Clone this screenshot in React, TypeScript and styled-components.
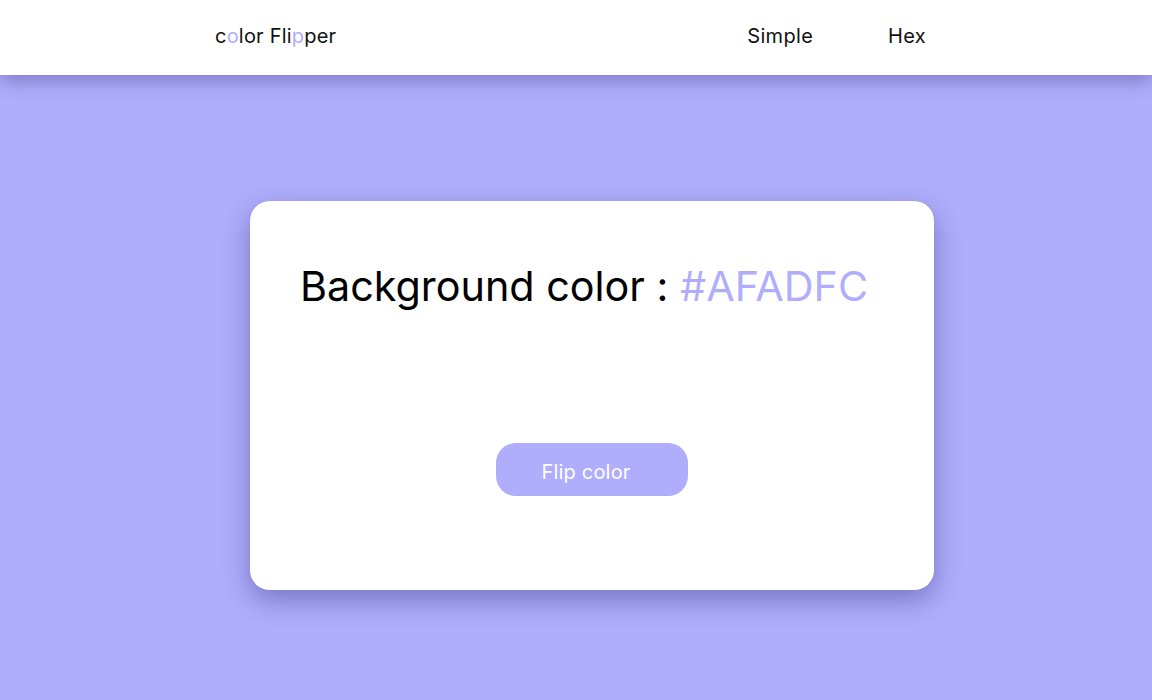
import React, { useState } from 'react';
import styled, { createGlobalStyle } from 'styled-components';

const GlobalStyle = createGlobalStyle`
  body {
    margin: 0;
    font-family: 'Inter', 'Open Sans', sans-serif;
    background: #afadfc;
  }
`;

const Page = styled.div<{ bg: string }>`
  min-height: 700px;
  background: ${(p) => p.bg};
`;

const Nav = styled.nav`
  position: relative;
  z-index: 2;
  height: 75px;
  box-sizing: border-box;
  background: #fff;
  box-shadow: 0 6px 18px rgba(40, 35, 110, 0.35);
  display: flex;
  align-items: center;
  padding: 0 226px 4px 215px;
  justify-content: space-between;
`;

const Logo = styled.div`
  font-size: 20px;
  color: #111;
  letter-spacing: 0.2px;
`;

const Accent = styled.span`
  color: #afadfc;
`;

const Links = styled.div`
  display: flex;
  gap: 75px;
`;

const NavLink = styled.a`
  font-size: 20px;
  color: #111;
  text-decoration: none;
  cursor: pointer;
  letter-spacing: 0.3px;
`;

const Main = styled.main`
  display: flex;
  justify-content: center;
  padding: 126px 0 0 32px;
`;

const Card = styled.section`
  width: 684px;
  height: 389px;
  box-sizing: border-box;
  background: #fff;
  border-radius: 20px;
  box-shadow: 0 10px 28px rgba(40, 35, 110, 0.4);
  padding: 60px 0 0 50px;
  display: flex;
  flex-direction: column;
`;

const Heading = styled.h2`
  margin: 0;
  font-weight: 400;
  font-size: 41.3px;
  color: #000;
  line-height: 50px;
  white-space: nowrap;
`;

const Value = styled.span`
  color: #afadfc;
`;

const FlipButton = styled.button`
  align-self: center;
  margin: 132px 0 0 -50px;
  width: 192px;
  height: 53px;
  box-sizing: border-box;
  padding: 4px 12px 0 0;
  border: none;
  border-radius: 20px;
  background: #afadfc;
  color: #fff;
  font-family: inherit;
  font-size: 20px;
  letter-spacing: 0.2px;
  cursor: pointer;
`;

const colors = ['#AFADFC', '#F4A261', '#2A9D8F', '#E76F51', '#8AB17D'];

export default function App() {
  const [color, setColor] = useState('#AFADFC');

  const flip = () => {
    const next = colors[Math.floor(Math.random() * colors.length)];
    setColor(next);
  };

  return (
    <Page bg={color}>
      <GlobalStyle />
      <Nav>
        <Logo>
          c<Accent>o</Accent>lor Fli<Accent>p</Accent>per
        </Logo>
        <Links>
          <NavLink>Simple</NavLink>
          <NavLink>Hex</NavLink>
        </Links>
      </Nav>
      <Main>
        <Card>
          <Heading>
            Background color : <Value>{color}</Value>
          </Heading>
          <FlipButton onClick={flip}>Flip color</FlipButton>
        </Card>
      </Main>
    </Page>
  );
}
